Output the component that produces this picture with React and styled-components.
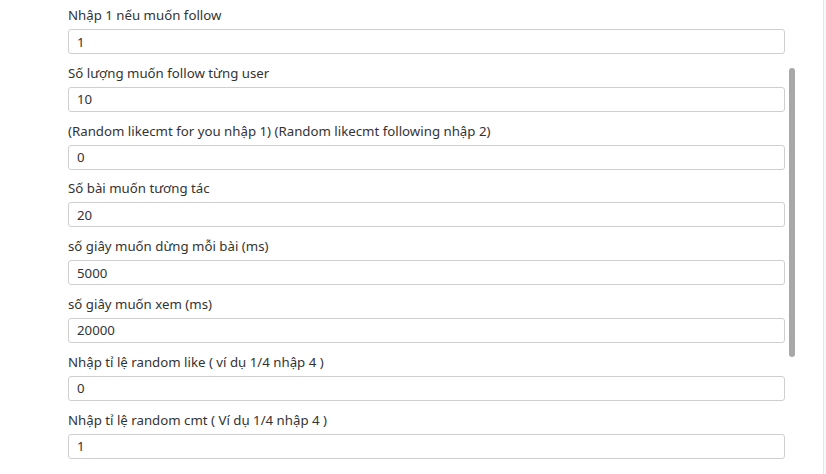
import React from "react";
import styled, { createGlobalStyle } from "styled-components";

const Global = createGlobalStyle`
  html, body { margin: 0; padding: 0; background: #ffffff; }
  body { font-family: "Noto Sans", "Open Sans", sans-serif; color: #212529; }
  * { box-sizing: border-box; }
`;

const Page = styled.div`
  display: flex;
  height: 474px;
  overflow: hidden;
`;

const Main = styled.main`
  position: relative;
  flex: 1;
  padding: 5px 38px 0 68px;
`;

const Aside = styled.aside`
  width: 3px;
  border-left: 1px solid #e6e6e6;
  background: #f8f9fa;
`;

const Form = styled.form`
  display: flex;
  flex-direction: column;
  gap: 8.8px;
`;

const Group = styled.div`
  display: flex;
  flex-direction: column;
  gap: 3px;
`;

const Label = styled.label`
  font-size: 13.25px;
  line-height: 21px;
  color: #333333;
`;

const Input = styled.input`
  width: 100%;
  height: 25px;
  padding: 0 8px;
  border: 1px solid #cfcfcf;
  border-radius: 3px;
  font-family: inherit;
  font-size: 13.25px;
  color: #333333;
  background: #fff;
  outline: none;
`;

const Thumb = styled.div`
  position: absolute;
  top: 68px;
  right: 28px;
  width: 6px;
  height: 289px;
  border-radius: 3px;
  background: #a8a8a8;
`;

const fields = [
  ["Nhập 1 nếu muốn follow", "1"],
  ["Số lượng muốn follow từng user", "10"],
  ["(Random likecmt for you nhập 1) (Random likecmt following nhập 2)", "0"],
  ["Số bài muốn tương tác", "20"],
  ["số giây muốn dừng mỗi bài (ms)", "5000"],
  ["số giây muốn xem (ms)", "20000"],
  ["Nhập tỉ lệ random like ( ví dụ 1/4 nhập 4 )", "0"],
  ["Nhập tỉ lệ random cmt ( Ví dụ 1/4 nhập 4 )", "1"],
];

export default function App() {
  return (
    <Page>
      <Global />
      <Main>
        <Form onSubmit={(e) => e.preventDefault()}>
          {fields.map(([label, value], i) => (
            <Group key={i}>
              <Label htmlFor={`f${i}`}>{label}</Label>
              <Input id={`f${i}`} defaultValue={value} />
            </Group>
          ))}
        </Form>
        <Thumb />
      </Main>
      <Aside />
    </Page>
  );
}
